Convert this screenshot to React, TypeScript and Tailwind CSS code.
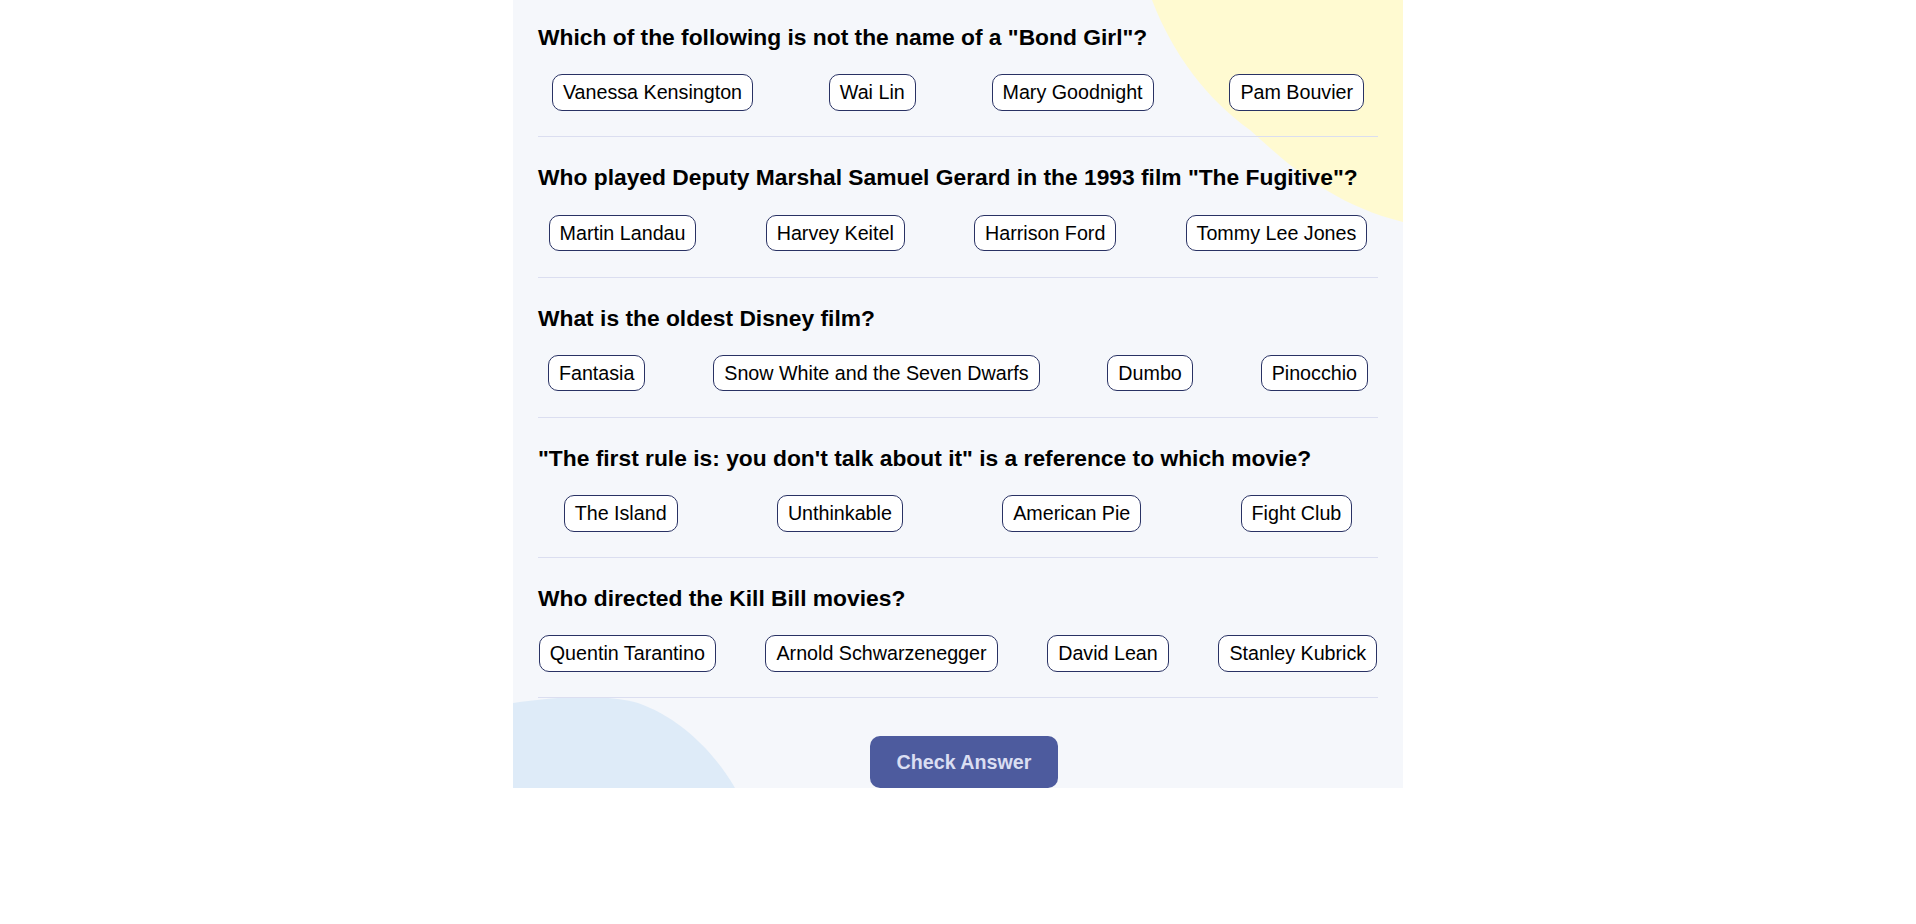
const questions = [
  {
    question: 'Which of the following is not the name of a "Bond Girl"?',
    answers: ["Vanessa Kensington", "Wai Lin", "Mary Goodnight", "Pam Bouvier"],
  },
  {
    question: 'Who played Deputy Marshal Samuel Gerard in the 1993 film "The Fugitive"?',
    answers: ["Martin Landau", "Harvey Keitel", "Harrison Ford", "Tommy Lee Jones"],
  },
  {
    question: "What is the oldest Disney film?",
    answers: ["Fantasia", "Snow White and the Seven Dwarfs", "Dumbo", "Pinocchio"],
  },
  {
    question: "\"The first rule is: you don't talk about it\" is a reference to which movie?",
    answers: ["The Island", "Unthinkable", "American Pie", "Fight Club"],
  },
  {
    question: "Who directed the Kill Bill movies?",
    answers: ["Quentin Tarantino", "Arnold Schwarzenegger", "David Lean", "Stanley Kubrick"],
  },
];

export default function App() {
  return (
    <div className="min-h-screen bg-white font-['Liberation_Sans',Arial,sans-serif]">
      <main className="relative mx-auto h-[788px] w-[890px] overflow-hidden bg-[#f5f7fb]">
        {/* Blobs */}
        <svg
          className="pointer-events-none absolute right-0 top-0"
          width="890"
          height="788"
          viewBox="0 0 890 788"
        >
          <path
            d="M639,0 C660,55 695,100 737,130 C775,165 820,205 890,222 L890,0 Z"
            fill="#fffad1"
          />
          <path
            d="M0,703 C40,697 90,693 125,703 C165,717 200,750 222,788 L0,788 Z"
            fill="#deebf8"
          />
        </svg>

        <div className="relative px-[25px]">
          {questions.map((q, index) => (
            <section
              key={index}
              className={`${
                index === 0 ? "pt-[24px]" : "pt-[27px]"
              } border-b border-[#dbdef0] pb-[25.5px]`}
            >
              <h2 className="mb-[24px] text-[22.8px] font-bold leading-[26.2px] text-black">
                {q.question}
              </h2>
              <div className="flex justify-around gap-12">
                {q.answers.map((a, i) => (
                  <button
                    key={i}
                    className="rounded-[10px] border border-[#293264] bg-white px-[10px] py-[6px] text-[19.7px] leading-[22.6px] text-black"
                  >
                    {a}
                  </button>
                ))}
              </div>
            </section>
          ))}

          <div className="flex justify-center pl-[12px] pt-[38px]">
            <button className="rounded-[10px] bg-[#4d5b9e] px-[27px] py-[14.5px] text-[19.7px] font-bold leading-[22.6px] text-[#dadef2]">
              Check Answer
            </button>
          </div>
        </div>
      </main>
    </div>
  );
}
